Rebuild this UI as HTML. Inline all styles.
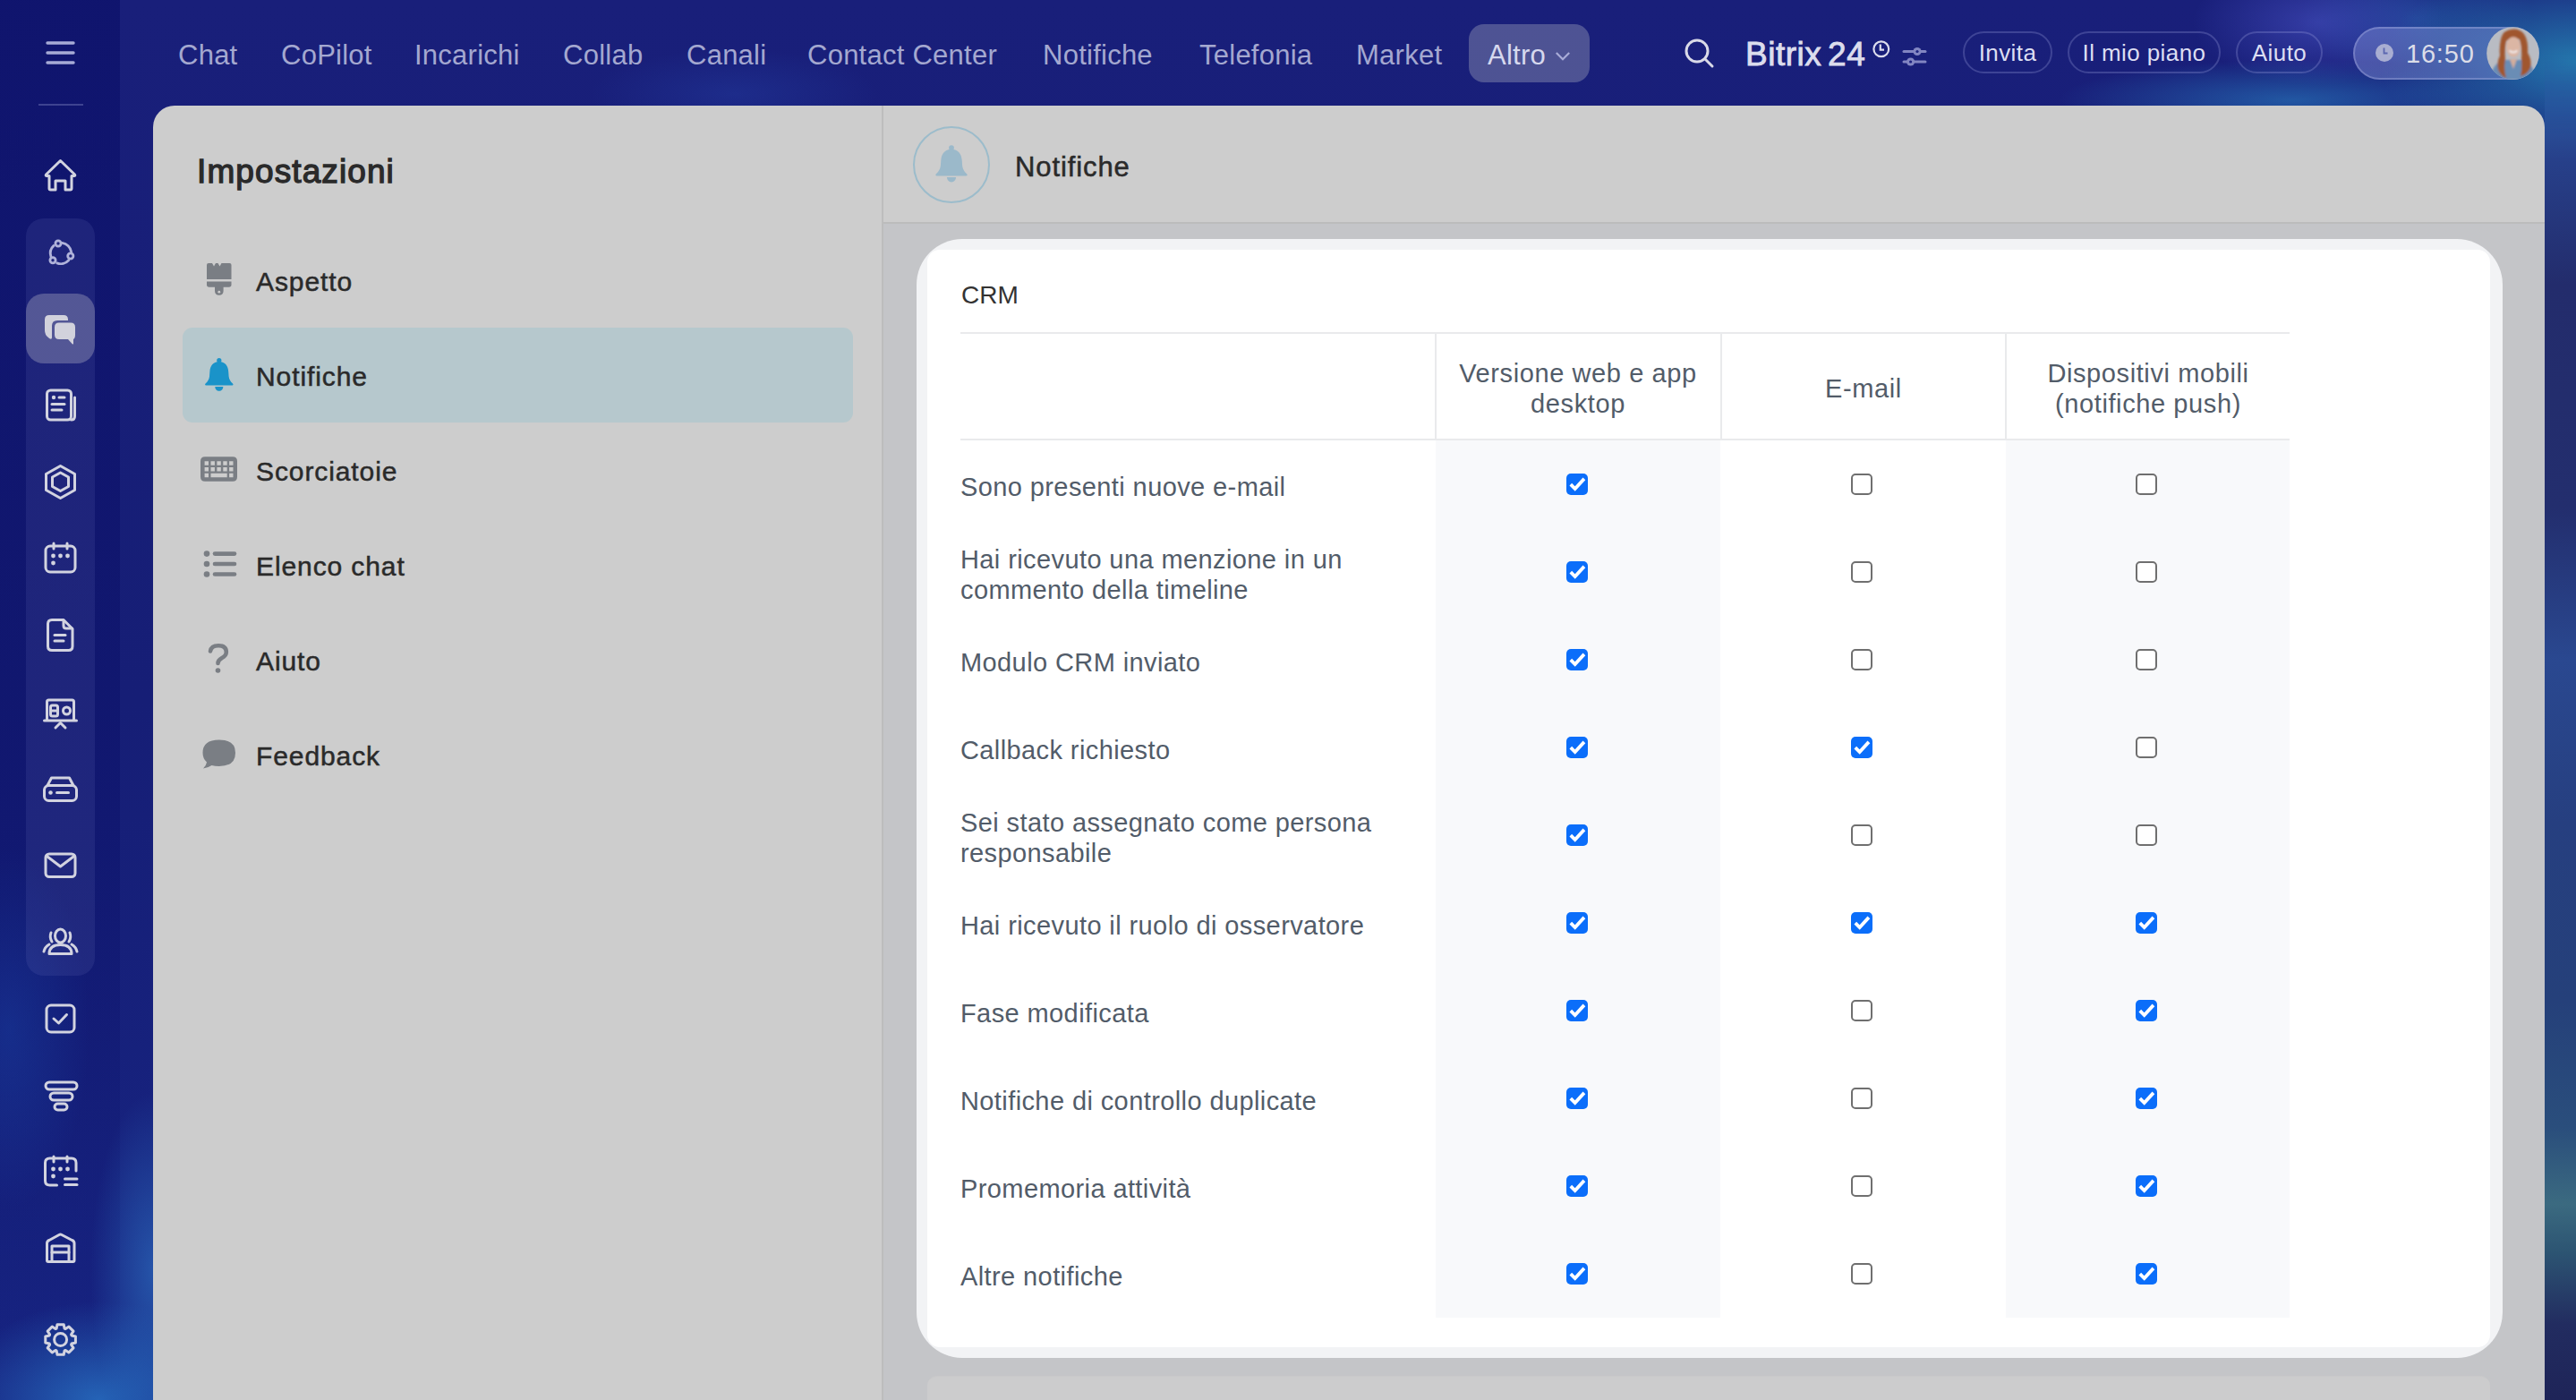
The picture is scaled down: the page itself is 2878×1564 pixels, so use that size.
<!DOCTYPE html>
<html><head><meta charset="utf-8">
<title>Impostazioni - Notifiche</title>
<style>
*{box-sizing:border-box;margin:0;padding:0}
html,body{width:2878px;height:1564px;overflow:hidden}
body{position:relative;font-family:"Liberation Sans",sans-serif;background:#161c6f}
.abs{position:absolute}
#bg{left:0;top:0;width:2878px;height:1564px;
 background:
  radial-gradient(ellipse 140px 70px at 2590px 25px, rgba(75,85,200,.55), rgba(75,85,200,0) 100%),
  radial-gradient(ellipse 220px 110px at 2878px 70px, rgba(40,150,190,.75), rgba(40,150,190,0) 100%),
  radial-gradient(ellipse 260px 45px at 2560px 112px, rgba(40,125,190,.6), rgba(40,125,190,0) 100%),
  radial-gradient(ellipse 130px 70px at 2700px 20px, rgba(40,110,180,.45), rgba(40,110,180,0) 100%),
  radial-gradient(ellipse 80px 140px at 2878px 700px, rgba(50,90,170,.5), rgba(50,90,170,0) 100%),
  radial-gradient(ellipse 80px 90px at 2870px 1430px, rgba(70,130,150,.7), rgba(70,130,150,0) 100%),
  radial-gradient(ellipse 100px 200px at 2878px 1000px, rgba(40,80,140,.45), rgba(40,80,140,0) 100%),
  radial-gradient(ellipse 160px 110px at 110px 1564px, rgba(40,115,195,.8), rgba(40,115,195,0) 100%),
  radial-gradient(ellipse 70px 200px at 171px 1420px, rgba(45,110,190,.65), rgba(45,110,190,0) 100%),
  radial-gradient(ellipse 90px 200px at 10px 1150px, rgba(30,80,180,.45), rgba(30,80,180,0) 100%),
  radial-gradient(ellipse 160px 50px at 820px 105px, rgba(35,60,160,.45), rgba(35,60,160,0) 100%),
  linear-gradient(180deg,#191f7a 0%,#161e76 50%,#172482 100%);}
#side{left:0;top:0;width:134px;height:1564px;background:linear-gradient(180deg,rgba(8,12,100,.55),rgba(8,12,100,.35) 60%,rgba(8,12,100,.15) 80%,rgba(8,12,100,0))}
.nav{top:0;height:106px;line-height:124px;font-size:31px;letter-spacing:0.25px;color:#a4a8d0;white-space:nowrap}
.pill{height:47px;border:2px solid rgba(170,175,230,.26);border-radius:24px;color:#dcdef2;font-size:26px;line-height:44px;letter-spacing:0.4px;text-align:center;white-space:nowrap}
#panel{left:171px;top:118px;width:2672px;height:1500px;background:#cdcdcd;border-radius:24px 24px 0 0}
.item{left:33px;width:748px;height:105px;font-size:30px;color:#2a2a2a;line-height:110px;letter-spacing:0.9px;-webkit-text-stroke:0.5px #2a2a2a}
.item .t{position:absolute;left:82px;top:0}
.cb{position:absolute;width:24px;height:24px;border-radius:5px}
.cb svg{position:absolute;left:0;top:0}
.cb.on{background:#0b6efa}
.cb.off{border:2px solid #6f6f6f;background:#fff}
.lbl{position:absolute;left:0;width:520px;font-size:29px;line-height:34px;letter-spacing:0.4px;color:#525c69;white-space:nowrap}
.hdr{position:absolute;top:0;height:120px;width:318px;padding-top:6px;display:flex;align-items:center;justify-content:center;text-align:center;font-size:29px;line-height:34px;letter-spacing:0.6px;color:#525c69}
</style></head>
<body>
<div id="bg" class="abs"></div>
<div id="side" class="abs"></div>
<div class="abs" style="left:2843px;top:60px;width:35px;height:1504px;-webkit-mask-image:linear-gradient(180deg,transparent 0px,#000 90px);background:linear-gradient(180deg,#2a62a8 0px,#2a58a0 58px,#27408a 118px,#232c6c 258px,#232e6e 508px,#2a4890 678px,#263f80 858px,#25407a 1058px,#2a4e7c 1200px,#3b6a80 1285px,#2c5472 1340px,#222c60 1420px,#1e2458 1504px)"></div>

<!-- hamburger + sidebar icons -->
<div class="abs" style="left:29px;top:244px;width:77px;height:846px;border-radius:20px;background:rgba(120,125,200,.14)"></div>
<div class="abs" style="left:29px;top:328px;width:77px;height:78px;border-radius:20px;background:rgba(170,171,195,.38)"></div>
<div class="abs" style="left:43px;top:116px;width:50px;height:2px;background:rgba(150,155,210,.35)"></div>
<svg class="abs" style="left:0;top:0" width="134" height="1564" viewBox="0 0 134 1564">
 <g fill="none" stroke="#d2d3e0" stroke-width="3.0" stroke-linecap="round" stroke-linejoin="round">
  <!-- hamburger -->
  <g stroke="#a7abd6" stroke-width="3.4"><line x1="53" y1="48" x2="82" y2="48"/><line x1="53" y1="59" x2="82" y2="59"/><line x1="53" y1="70" x2="82" y2="70"/></g>
  <!-- home -->
  <path d="M67.5 179.5 L51.5 195 Q50.5 196.5 52.5 196.5 L55 196.5 L55 210.5 Q55 212 56.5 212 L62 212 L62 202 L73 202 L73 212 L78.5 212 Q80 212 80 210.5 L80 196.5 L82.5 196.5 Q84.5 196.5 83.5 195 Z"/>
  <!-- collab -->
  <g stroke="#b0b3da" stroke-width="2.8">
   <circle cx="65" cy="272" r="3.1"/><circle cx="78.8" cy="286" r="3.1"/><circle cx="59" cy="290.8" r="3.1"/>
   <path d="M69.5 271.4 A11.7 11.7 0 0 1 79.6 281.3"/><path d="M76.7 290.8 A11.7 11.7 0 0 1 63.7 293.9"/><path d="M56.9 286.7 A11.7 11.7 0 0 1 60.1 274.4"/>
  </g>
  <!-- news -->
  <rect x="52.5" y="436" width="27" height="33" rx="4"/>
  <path d="M83.5 444 L83.5 465 Q83.5 469 79.5 469"/>
  <circle cx="60" cy="444" r="2.2" fill="#d2d3e0" stroke="none"/>
  <line x1="66" y1="444" x2="72" y2="444"/><line x1="58" y1="451.5" x2="72" y2="451.5"/><line x1="58" y1="458" x2="69" y2="458"/>
  <!-- hexagon -->
  <path d="M67.5 520.5 L83.5 529.5 L83.5 547.5 L67.5 556.5 L51.5 547.5 L51.5 529.5 Z"/>
  <path d="M67.5 528 L76.5 533 L76.5 543.5 L67.5 548.5 L58.5 543.5 L58.5 533 Z"/>
  <!-- calendar -->
  <rect x="51" y="610" width="33" height="29" rx="5"/>
  <line x1="60" y1="607" x2="60" y2="613"/><line x1="75" y1="607" x2="75" y2="613"/>
  <g fill="#d2d3e0" stroke="none"><circle cx="59.5" cy="621" r="2.4"/><circle cx="67.5" cy="621" r="2.4"/><circle cx="75.5" cy="621" r="2.4"/><circle cx="59.5" cy="629" r="2.4"/></g>
  <!-- doc -->
  <path d="M58 692.5 L71 692.5 L81 702.5 L81 722 Q81 726.5 76.5 726.5 L58 726.5 Q53.5 726.5 53.5 722 L53.5 697 Q53.5 692.5 58 692.5 Z"/>
  <path d="M71 693 L71 699 Q71 702 74 702 L80.5 702"/>
  <line x1="61" y1="709.5" x2="73" y2="709.5"/><line x1="61" y1="716" x2="71" y2="716"/>
  <!-- presentation -->
  <path d="M52.5 804 L52.5 784 Q52.5 782 54.5 782 L80.5 782 Q82.5 782 82.5 784 L82.5 804"/>
  <line x1="49.5" y1="805" x2="85.5" y2="805"/>
  <path d="M62 813 L67.5 807.5 L73 813"/>
  <rect x="56.5" y="788" width="8" height="12" rx="2"/><line x1="57" y1="794" x2="64" y2="794"/>
  <circle cx="74.5" cy="794" r="4"/>
  <!-- drive -->
  <path d="M53 877.5 L57.5 869 L77.5 869 L82 877.5"/>
  <rect x="49.5" y="877.5" width="36" height="17" rx="5"/>
  <circle cx="56.5" cy="885.5" r="2.3" fill="#d2d3e0" stroke="none"/>
  <line x1="63.5" y1="885.5" x2="76.5" y2="885.5"/>
  <!-- mail -->
  <rect x="51" y="954" width="33" height="25.5" rx="4"/>
  <path d="M53 957 L67.5 968 L82 957"/>
  <!-- people -->
  <ellipse cx="67.5" cy="1045.5" rx="6" ry="7.5"/>
  <path d="M55 1065.5 Q55 1055.5 67.5 1055.5 Q80 1055.5 80 1065.5 Z"/>
  <path d="M57 1042 Q55 1047 58 1052"/><path d="M78 1042 Q80 1047 77 1052"/>
  <path d="M49 1063 Q50 1058 55 1055"/><path d="M86 1063 Q85 1058 80 1055"/>
  <!-- tasks -->
  <rect x="52" y="1123" width="31" height="30" rx="5"/>
  <path d="M60 1138 L65.5 1143 L74.5 1133.5"/>
  <!-- funnel -->
  <rect x="51" y="1209" width="35" height="8" rx="4"/>
  <rect x="56" y="1221" width="25" height="8" rx="4"/>
  <rect x="61" y="1233" width="14" height="7" rx="3.5"/>
  <!-- calendar list -->
  <path d="M85 1308 L85 1299 Q85 1294 80 1294 L55.5 1294 Q50.5 1294 50.5 1299 L50.5 1319 Q50.5 1324 55.5 1324 L63.5 1324"/>
  <line x1="60" y1="1292" x2="60" y2="1298"/><line x1="75" y1="1292" x2="75" y2="1298"/>
  <g fill="#d2d3e0" stroke="none"><circle cx="59.5" cy="1306" r="2.4"/><circle cx="67.5" cy="1306" r="2.4"/><circle cx="75.5" cy="1306" r="2.4"/><circle cx="59.5" cy="1314" r="2.4"/></g>
  <line x1="72.5" y1="1317" x2="86" y2="1317"/><line x1="72.5" y1="1323.5" x2="86" y2="1323.5"/>
  <!-- warehouse -->
  <path d="M52.5 1408 L52.5 1389 Q52.5 1386.5 55 1385.5 L66 1379.5 Q67.5 1378.7 69 1379.5 L80.5 1385.5 Q83 1386.5 83 1389 L83 1408 Q83 1409.5 81.5 1409.5 L54 1409.5 Q52.5 1409.5 52.5 1408 Z"/>
  <path d="M58 1409 L58 1392 L77 1392 L77 1409"/><line x1="58" y1="1399" x2="77" y2="1399"/>
  <!-- gear -->
  <circle cx="67.6" cy="1496.5" r="7"/>
  <path id="gear" d="M63.09 1484.10 L64.02 1479.68 L71.18 1479.68 L72.11 1484.10 L73.18 1484.54 L76.97 1482.07 L82.03 1487.13 L79.56 1490.92 L80.00 1491.99 L84.42 1492.92 L84.42 1500.08 L80.00 1501.01 L79.56 1502.08 L82.03 1505.87 L76.97 1510.93 L73.18 1508.46 L72.11 1508.90 L71.18 1513.32 L64.02 1513.32 L63.09 1508.90 L62.02 1508.46 L58.23 1510.93 L53.17 1505.87 L55.64 1502.08 L55.20 1501.01 L50.78 1500.08 L50.78 1492.92 L55.20 1491.99 L55.64 1490.92 L53.17 1487.13 L58.23 1482.07 L62.02 1484.54 Z"/>
 </g>
 <!-- chat (filled) -->
 <path d="M55 352 L71 352 Q76 352 76 357 L76 358 L64 358 Q58 358 58 364 L58 377 Q58 380 55 378 L54 377 Q50 374 50 369 L50 357 Q50 352 55 352 Z" fill="#d2d2dc"/>
 <path d="M66 360.5 L79 360.5 Q84 360.5 84 365.5 L84 374 Q84 378 82 379 L82 384 Q81.5 385 80.5 384 L76 379 L66 379 Q61 379 61 374 L61 365.5 Q61 360.5 66 360.5 Z" fill="#d2d2dc"/>
</svg>

<!-- top nav -->
<div class="abs nav" style="left:199px">Chat</div>
<div class="abs nav" style="left:314px">CoPilot</div>
<div class="abs nav" style="left:463px">Incarichi</div>
<div class="abs nav" style="left:629px">Collab</div>
<div class="abs nav" style="left:767px">Canali</div>
<div class="abs nav" style="left:902px">Contact Center</div>
<div class="abs nav" style="left:1165px">Notifiche</div>
<div class="abs nav" style="left:1340px">Telefonia</div>
<div class="abs nav" style="left:1515px">Market</div>
<div class="abs" style="left:1641px;top:27px;width:135px;height:65px;border-radius:17px;background:rgba(158,162,188,.40)"></div>
<div class="abs nav" style="left:1662px;color:#d6d8ee">Altro</div>
<svg class="abs" style="left:1736px;top:56px" width="20" height="14" viewBox="0 0 20 14"><polyline points="2.8,3 10,10.2 17.2,3" fill="none" stroke="#a9acd8" stroke-width="2.2" stroke-linecap="butt" stroke-linejoin="miter"/></svg>

<!-- search -->
<svg class="abs" style="left:1880px;top:41px" width="38" height="38" viewBox="0 0 38 38"><g fill="none" stroke="#d9dae8" stroke-width="3" stroke-linecap="round"><circle cx="16" cy="16" r="12"/><line x1="25" y1="25" x2="33" y2="33"/></g></svg>
<!-- logo -->
<div class="abs" style="left:1950px;top:36px;font-size:37px;line-height:50px;color:#dcdded;white-space:nowrap;letter-spacing:0.5px;-webkit-text-stroke:0.9px #dcdded">Bitrix</div>
<div class="abs" style="left:2042px;top:36px;font-size:37px;line-height:50px;color:#dcdded;white-space:nowrap;letter-spacing:0.6px;-webkit-text-stroke:0.9px #dcdded">24</div>
<svg class="abs" style="left:2091px;top:44px" width="22" height="22" viewBox="0 0 22 22"><circle cx="10.8" cy="10.8" r="8.4" fill="none" stroke="#dcdded" stroke-width="2.2"/><polyline points="9.8,5.5 9.8,11.6 14,11.6" fill="none" stroke="#dcdded" stroke-width="2.2"/></svg>
<svg class="abs" style="left:2122px;top:48px" width="34" height="28" viewBox="0 0 34 28"><g stroke="#8286c2" stroke-width="3" stroke-linecap="round" fill="none"><line x1="5" y1="9.5" x2="29" y2="9.5"/><line x1="5" y1="21" x2="29" y2="21"/></g><circle cx="20" cy="9.5" r="4.6" fill="#8286c2"/><circle cx="20" cy="9.5" r="1.6" fill="#1d2380"/><circle cx="12.6" cy="21" r="4.6" fill="#8286c2"/><circle cx="12.6" cy="21" r="1.6" fill="#1d2380"/></svg>

<div class="abs pill" style="left:2193px;top:35px;width:100px">Invita</div>
<div class="abs pill" style="left:2310px;top:35px;width:171px">Il mio piano</div>
<div class="abs pill" style="left:2498px;top:35px;width:97px">Aiuto</div>
<div class="abs" style="left:2629px;top:30px;width:208px;height:59px;border-radius:30px;background:rgba(140,150,220,.40);border:2px solid rgba(190,195,240,.32)"></div>
<svg class="abs" style="left:2653px;top:48px" width="22" height="22" viewBox="0 0 22 22"><circle cx="11" cy="11" r="10" fill="#a9aed2"/><polyline points="10.5,5.5 10.5,11.5 14.5,11.5" fill="none" stroke="#5b66b0" stroke-width="1.8"/></svg>
<div class="abs" style="left:2688px;top:39px;font-size:29px;line-height:42px;letter-spacing:0.8px;color:#dcdde8;white-space:nowrap">16:50</div>
<!-- avatar -->
<svg class="abs" style="left:2778px;top:30px" width="59" height="59" viewBox="0 0 59 59">
 <defs><clipPath id="av"><circle cx="29.5" cy="29.5" r="29.3"/></clipPath><filter id="bl"><feGaussianBlur stdDeviation="0.8"/></filter></defs>
 <g clip-path="url(#av)">
  <rect width="59" height="59" fill="#b9bcc3"/>
  <g filter="url(#bl)">
  <path d="M4 59 Q6 42 18 37 L42 37 Q53 42 55 59 Z" fill="#6a8db5"/>
  <path d="M30 2.5 Q18 3 16 14 Q14 24 15 32 Q11 40 13 48 Q16 55 22 57 Q19 47 21 37 Q20 26 22 16 Q28 10 37 14 Q40 24 39 36 Q40 46 38 55 Q46 53 49 46 Q51 37 46 29 Q47 16 42 8 Q37 2 30 2.5 Z" fill="#a0562f"/>
  <ellipse cx="30" cy="22.5" rx="8" ry="11.2" fill="#dbb6a4"/>
  <path d="M25.5 26.5 Q30 30.5 34.5 26.5" stroke="#f3ecec" stroke-width="2" fill="none"/>
  <path d="M26 36 L30 47 L34 36 Z" fill="#d3ad9c"/>
  </g>
 </g>
</svg>

<!-- settings panel -->
<div id="panel" class="abs">
  <div class="abs" style="left:49px;top:44px;font-size:37px;font-weight:normal;letter-spacing:1.1px;color:#2a2a2a;-webkit-text-stroke:1.3px #2a2a2a;line-height:60px">Impostazioni</div>
  <div class="abs" style="left:33px;top:248px;width:749px;height:106px;border-radius:11px;background:#b6c8cd"></div>
  <div class="abs item" style="top:142px"><span class="t">Aspetto</span></div>
  <div class="abs item" style="top:248px"><span class="t">Notifiche</span></div>
  <div class="abs item" style="top:354px"><span class="t">Scorciatoie</span></div>
  <div class="abs item" style="top:460px"><span class="t">Elenco chat</span></div>
  <div class="abs item" style="top:566px"><span class="t">Aiuto</span></div>
  <div class="abs item" style="top:672px"><span class="t">Feedback</span></div>
  <div class="abs" style="left:814px;top:0;width:2px;height:1500px;background:#bdbdbd"></div>
  <div class="abs" style="left:816px;top:130px;width:1856px;height:1370px;background:#c4c5c8;border-top:2px solid #bcbcbc"></div>
  <div class="abs" style="left:849px;top:23px;width:86px;height:86px;border-radius:50%;border:2px solid #9cbccb"></div>
  <div class="abs" style="left:963px;top:41px;font-size:31px;line-height:56px;letter-spacing:0.9px;color:#2a2a2a;-webkit-text-stroke:0.5px #2a2a2a">Notifiche</div>
</div>
<!-- settings nav icons -->
<svg class="abs" style="left:215px;top:280px" width="60" height="600" viewBox="215 280 60 600">
 <g fill="#7a7e84">
  <!-- brush -->
  <path d="M233 294 L237 294 L239 297.5 L241 294 L243.5 294 L245.5 297.5 L247.5 294 L256.5 294 Q258.5 294 258.5 296 L258.5 312 L231 312 L231 296 Q231 294 233 294 Z"/>
  <path d="M231 314.5 L258.5 314.5 L258.5 318 Q258.5 320.7 255.8 320.7 L249.6 320.7 L249.6 325 Q249.6 329.8 244.8 329.8 Q240 329.8 240 325 L240 320.7 L233.7 320.7 Q231 320.7 231 318 Z"/>
  <circle cx="244.8" cy="326.2" r="1.4" fill="#cdcdcd"/>
  <!-- keyboard -->
  <path fill-rule="evenodd" d="M229 510.2 L260 510.2 Q265 510.2 265 515.2 L265 532.8 Q265 537.8 260 537.8 L229 537.8 Q224 537.8 224 532.8 L224 515.2 Q224 510.2 229 510.2 Z
   M228.6 515.3 h4.4 v4.4 h-4.4 Z M235.5 515.3 h4.4 v4.4 h-4.4 Z M242.4 515.3 h4.4 v4.4 h-4.4 Z M249.3 515.3 h4.4 v4.4 h-4.4 Z M256.1 515.3 h4.4 v4.4 h-4.4 Z
   M228.6 522 h4.4 v4.4 h-4.4 Z M235.5 522 h4.4 v4.4 h-4.4 Z M242.4 522 h4.4 v4.4 h-4.4 Z M249.3 522 h4.4 v4.4 h-4.4 Z M256.1 522 h4.4 v4.4 h-4.4 Z
   M228.6 528.8 h4.4 v4.4 h-4.4 Z M235.5 528.8 h18.2 v4.4 h-18.2 Z M256.1 528.8 h4.4 v4.4 h-4.4 Z"/>
  <!-- list -->
  <circle cx="231" cy="618.6" r="3.3"/><circle cx="231" cy="630" r="3.3"/><circle cx="231" cy="641.5" r="3.3"/>
  <g stroke="#7a7e84" stroke-width="4.6" stroke-linecap="round"><line x1="240" y1="618.6" x2="262" y2="618.6"/><line x1="240" y1="630" x2="262" y2="630"/><line x1="240" y1="641.5" x2="262" y2="641.5"/></g>
  <!-- help -->
  <path d="M235 727.5 Q236 721.3 244 721.3 Q252.8 721.3 252.8 728.5 Q252.8 732.5 248 735 Q243.5 737.5 243.5 741" fill="none" stroke="#7a7e84" stroke-width="4.6" stroke-linecap="round"/>
  <circle cx="243.5" cy="749" r="2.8"/>
  <!-- feedback -->
  <path d="M244.8 826.5 Q263 826.5 263 841 Q263 856 244.8 856 Q240 856 236.5 855 Q232 858 227 858.5 Q230.5 855 231 851.5 Q226.5 847.5 226.5 841 Q226.5 826.5 244.8 826.5 Z"/>
 </g>
 <!-- bell active -->
 <g fill="#1a93c9" transform="translate(228.8 400)">
  <circle cx="16" cy="2.6" r="2.6"/>
  <path d="M16 4 C9 4 6 9 5.6 15 L5.2 20.5 C4.9 23.7 3.3 26.2 1 28.3 C-0.3 29.5 0.3 30.6 1.9 30.6 L30.1 30.6 C31.7 30.6 32.3 29.5 31 28.3 C28.7 26.2 27.1 23.7 26.8 20.5 L26.4 15 C26 9 23 4 16 4 Z"/>
  <path d="M11.5 31.9 L20.5 31.9 C20.5 34.6 18.5 36.7 16 36.7 C13.5 36.7 11.5 34.6 11.5 31.9 Z"/>
 </g>
</svg>
<!-- header bell -->
<svg class="abs" style="left:1045px;top:162px" width="36" height="42" viewBox="0 0 32 37">
 <g fill="#9bb9ca" transform="translate(0 0)">
  <circle cx="16" cy="2.6" r="2.6"/>
  <path d="M16 4 C9 4 6 9 5.6 15 L5.2 20.5 C4.9 23.7 3.3 26.2 1 28.3 C-0.3 29.5 0.3 30.6 1.9 30.6 L30.1 30.6 C31.7 30.6 32.3 29.5 31 28.3 C28.7 26.2 27.1 23.7 26.8 20.5 L26.4 15 C26 9 23 4 16 4 Z"/>
  <path d="M11.5 31.9 L20.5 31.9 C20.5 34.6 18.5 36.7 16 36.7 C13.5 36.7 11.5 34.6 11.5 31.9 Z"/>
 </g>
</svg>

<!-- next card (dimmed) -->
<div class="abs" style="left:1036px;top:1537px;width:1746px;height:100px;border-radius:11px;background:#cccccd;border-top:1px solid #c9c9ca"></div>

<!-- CRM card -->
<div class="abs" style="left:1024px;top:267px;width:1772px;height:1250px;border-radius:51px;background:#f2f3f5"></div>
<div class="abs" style="left:1036px;top:279px;width:1746px;height:1226px;border-radius:14px;background:#fff"></div>
<div class="abs" style="left:1074px;top:310px;font-size:28px;line-height:40px;color:#333">CRM</div>
<div id="tbl" class="abs" style="left:1073px;top:371px;width:1485px;height:1100px">
  <div class="abs" style="left:0;top:0;width:1485px;height:2px;background:#e9eaec"></div>
  <div class="abs" style="left:0;top:119px;width:1485px;height:2px;background:#e9eaec"></div>
  <div class="abs" style="left:530px;top:0;width:2px;height:120px;background:#e9eaec"></div>
  <div class="abs" style="left:849px;top:0;width:2px;height:120px;background:#e9eaec"></div>
  <div class="abs" style="left:1167px;top:0;width:2px;height:120px;background:#e9eaec"></div>
  <div class="abs" style="left:531px;top:121px;width:318px;height:980px;background:#f8f9fb"></div>
  <div class="abs" style="left:1168px;top:121px;width:317px;height:980px;background:#f8f9fb"></div>
  <div class="hdr" style="left:531px">Versione web e app<br>desktop</div>
  <div class="hdr" style="left:850px">E-mail</div>
  <div class="hdr" style="left:1168px">Dispositivi mobili<br>(notifiche push)</div>
<div class="lbl" style="top:156px">Sono presenti nuove e-mail</div>
<div class="cb on" style="left:677px;top:158px"><svg width="24" height="24" viewBox="0 0 24 24"><path d="M4.8 12.1 L9.7 17 L19.9 5.9" fill="none" stroke="#fff" stroke-width="3.8" stroke-linecap="butt" stroke-linejoin="miter"/></svg></div>
<div class="cb off" style="left:995px;top:158px"></div>
<div class="cb off" style="left:1313px;top:158px"></div>
<div class="lbl" style="top:237px">Hai ricevuto una menzione in un<br>commento della timeline</div>
<div class="cb on" style="left:677px;top:256px"><svg width="24" height="24" viewBox="0 0 24 24"><path d="M4.8 12.1 L9.7 17 L19.9 5.9" fill="none" stroke="#fff" stroke-width="3.8" stroke-linecap="butt" stroke-linejoin="miter"/></svg></div>
<div class="cb off" style="left:995px;top:256px"></div>
<div class="cb off" style="left:1313px;top:256px"></div>
<div class="lbl" style="top:352px">Modulo CRM inviato</div>
<div class="cb on" style="left:677px;top:354px"><svg width="24" height="24" viewBox="0 0 24 24"><path d="M4.8 12.1 L9.7 17 L19.9 5.9" fill="none" stroke="#fff" stroke-width="3.8" stroke-linecap="butt" stroke-linejoin="miter"/></svg></div>
<div class="cb off" style="left:995px;top:354px"></div>
<div class="cb off" style="left:1313px;top:354px"></div>
<div class="lbl" style="top:450px">Callback richiesto</div>
<div class="cb on" style="left:677px;top:452px"><svg width="24" height="24" viewBox="0 0 24 24"><path d="M4.8 12.1 L9.7 17 L19.9 5.9" fill="none" stroke="#fff" stroke-width="3.8" stroke-linecap="butt" stroke-linejoin="miter"/></svg></div>
<div class="cb on" style="left:995px;top:452px"><svg width="24" height="24" viewBox="0 0 24 24"><path d="M4.8 12.1 L9.7 17 L19.9 5.9" fill="none" stroke="#fff" stroke-width="3.8" stroke-linecap="butt" stroke-linejoin="miter"/></svg></div>
<div class="cb off" style="left:1313px;top:452px"></div>
<div class="lbl" style="top:531px">Sei stato assegnato come persona<br>responsabile</div>
<div class="cb on" style="left:677px;top:550px"><svg width="24" height="24" viewBox="0 0 24 24"><path d="M4.8 12.1 L9.7 17 L19.9 5.9" fill="none" stroke="#fff" stroke-width="3.8" stroke-linecap="butt" stroke-linejoin="miter"/></svg></div>
<div class="cb off" style="left:995px;top:550px"></div>
<div class="cb off" style="left:1313px;top:550px"></div>
<div class="lbl" style="top:646px">Hai ricevuto il ruolo di osservatore</div>
<div class="cb on" style="left:677px;top:648px"><svg width="24" height="24" viewBox="0 0 24 24"><path d="M4.8 12.1 L9.7 17 L19.9 5.9" fill="none" stroke="#fff" stroke-width="3.8" stroke-linecap="butt" stroke-linejoin="miter"/></svg></div>
<div class="cb on" style="left:995px;top:648px"><svg width="24" height="24" viewBox="0 0 24 24"><path d="M4.8 12.1 L9.7 17 L19.9 5.9" fill="none" stroke="#fff" stroke-width="3.8" stroke-linecap="butt" stroke-linejoin="miter"/></svg></div>
<div class="cb on" style="left:1313px;top:648px"><svg width="24" height="24" viewBox="0 0 24 24"><path d="M4.8 12.1 L9.7 17 L19.9 5.9" fill="none" stroke="#fff" stroke-width="3.8" stroke-linecap="butt" stroke-linejoin="miter"/></svg></div>
<div class="lbl" style="top:744px">Fase modificata</div>
<div class="cb on" style="left:677px;top:746px"><svg width="24" height="24" viewBox="0 0 24 24"><path d="M4.8 12.1 L9.7 17 L19.9 5.9" fill="none" stroke="#fff" stroke-width="3.8" stroke-linecap="butt" stroke-linejoin="miter"/></svg></div>
<div class="cb off" style="left:995px;top:746px"></div>
<div class="cb on" style="left:1313px;top:746px"><svg width="24" height="24" viewBox="0 0 24 24"><path d="M4.8 12.1 L9.7 17 L19.9 5.9" fill="none" stroke="#fff" stroke-width="3.8" stroke-linecap="butt" stroke-linejoin="miter"/></svg></div>
<div class="lbl" style="top:842px">Notifiche di controllo duplicate</div>
<div class="cb on" style="left:677px;top:844px"><svg width="24" height="24" viewBox="0 0 24 24"><path d="M4.8 12.1 L9.7 17 L19.9 5.9" fill="none" stroke="#fff" stroke-width="3.8" stroke-linecap="butt" stroke-linejoin="miter"/></svg></div>
<div class="cb off" style="left:995px;top:844px"></div>
<div class="cb on" style="left:1313px;top:844px"><svg width="24" height="24" viewBox="0 0 24 24"><path d="M4.8 12.1 L9.7 17 L19.9 5.9" fill="none" stroke="#fff" stroke-width="3.8" stroke-linecap="butt" stroke-linejoin="miter"/></svg></div>
<div class="lbl" style="top:940px">Promemoria attività</div>
<div class="cb on" style="left:677px;top:942px"><svg width="24" height="24" viewBox="0 0 24 24"><path d="M4.8 12.1 L9.7 17 L19.9 5.9" fill="none" stroke="#fff" stroke-width="3.8" stroke-linecap="butt" stroke-linejoin="miter"/></svg></div>
<div class="cb off" style="left:995px;top:942px"></div>
<div class="cb on" style="left:1313px;top:942px"><svg width="24" height="24" viewBox="0 0 24 24"><path d="M4.8 12.1 L9.7 17 L19.9 5.9" fill="none" stroke="#fff" stroke-width="3.8" stroke-linecap="butt" stroke-linejoin="miter"/></svg></div>
<div class="lbl" style="top:1038px">Altre notifiche</div>
<div class="cb on" style="left:677px;top:1040px"><svg width="24" height="24" viewBox="0 0 24 24"><path d="M4.8 12.1 L9.7 17 L19.9 5.9" fill="none" stroke="#fff" stroke-width="3.8" stroke-linecap="butt" stroke-linejoin="miter"/></svg></div>
<div class="cb off" style="left:995px;top:1040px"></div>
<div class="cb on" style="left:1313px;top:1040px"><svg width="24" height="24" viewBox="0 0 24 24"><path d="M4.8 12.1 L9.7 17 L19.9 5.9" fill="none" stroke="#fff" stroke-width="3.8" stroke-linecap="butt" stroke-linejoin="miter"/></svg></div>
</div>
</body></html>
